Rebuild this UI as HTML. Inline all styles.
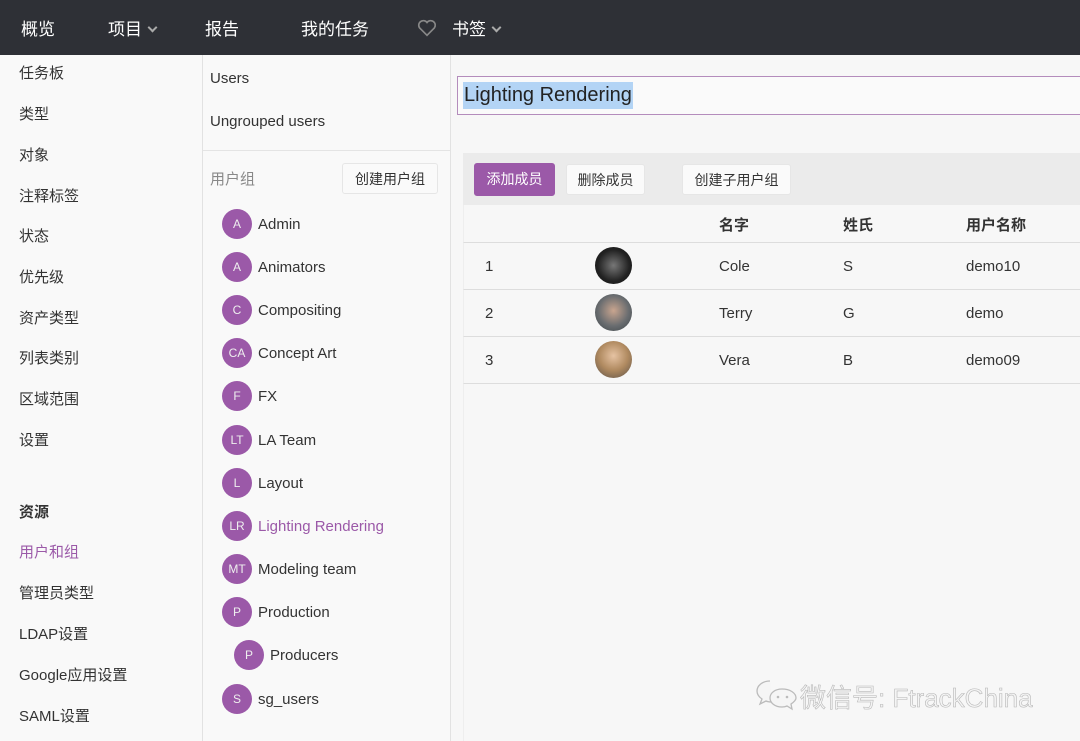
<!DOCTYPE html>
<html><head><meta charset="utf-8"><style>
*{margin:0;padding:0;box-sizing:border-box}
body{width:1080px;height:741px;overflow:hidden;background:#f7f7f7;font-family:"Liberation Sans","Noto Sans CJK SC",sans-serif;color:#333;position:relative}
.top{position:absolute;left:0;top:0;width:1080px;height:55px;background:#2e3036;color:#fff;font-size:17px}
.top span{position:absolute;top:15px}
.chev{display:inline-block;width:7px;height:7px;border-right:2.5px solid #aaa;border-bottom:2.5px solid #aaa;transform:rotate(45deg);margin-left:7px;position:relative;top:-4px}
.abs{position:absolute;white-space:nowrap}
.left{position:absolute;left:0;top:55px;width:203px;height:686px;border-right:1px solid #e2e2e2;background:#f9f9f9}
.mid{position:absolute;left:203px;top:55px;width:248px;height:686px;border-right:1px solid #e2e2e2;background:#f9f9f9}
.l{font-size:15px;left:19px}
.c{position:absolute;width:30px;height:30px;border-radius:50%;background:#9b59a8;color:#eee;font-size:12px;text-align:center;line-height:30px}
.g{font-size:15px;margin-top:2px}
.btn{position:absolute;background:#fafafa;border:1px solid #e6e6e6;border-radius:3px;font-size:14px;text-align:center;line-height:31px}
.row{position:absolute;left:463px;width:617px;border-bottom:1px solid #ddd;font-size:15px}
</style></head><body>
<div class="top">
<span style="left:21px">概览</span>
<span style="left:108px">项目<i class="chev"></i></span>
<span style="left:205px">报告</span>
<span style="left:301px">我的任务</span>
<span style="left:416px;top:17px"><svg width="22" height="22" viewBox="0 0 24 24"><path d="M12 20 L4 12 A4.5 4.5 0 0 1 12 6 A4.5 4.5 0 0 1 20 12 Z" fill="none" stroke="#888" stroke-width="1.8"/></svg></span>
<span style="left:452px">书签<i class="chev"></i></span>
</div>
<div class="left">
<div class="abs l" style="top:7px">任务板</div>
<div class="abs l" style="top:48px">类型</div>
<div class="abs l" style="top:89px">对象</div>
<div class="abs l" style="top:130px">注释标签</div>
<div class="abs l" style="top:170px">状态</div>
<div class="abs l" style="top:211px">优先级</div>
<div class="abs l" style="top:252px">资产类型</div>
<div class="abs l" style="top:292px">列表类别</div>
<div class="abs l" style="top:333px">区域范围</div>
<div class="abs l" style="top:374px">设置</div>
<div class="abs l" style="top:446px;font-weight:bold">资源</div>
<div class="abs l" style="top:486px;color:#9b59a8">用户和组</div>
<div class="abs l" style="top:527px">管理员类型</div>
<div class="abs l" style="top:568px">LDAP设置</div>
<div class="abs l" style="top:609px">Google应用设置</div>
<div class="abs l" style="top:650px">SAML设置</div>
</div>
<div class="mid">
<div class="abs g" style="left:7px;top:13px">Users</div>
<div class="abs g" style="left:7px;top:56px">Ungrouped users</div>
<div class="abs" style="left:0;top:95px;width:247px;border-top:1px solid #e4e4e4"></div>
<div class="abs" style="left:7px;top:113px;font-size:15px;color:#888">用户组</div>
<div class="btn" style="left:139px;top:108px;width:96px;height:31px">创建用户组</div>
</div>
<div class="c" style="left:222px;top:209px">A</div><div class="abs g" style="left:258px;top:214px">Admin</div>
<div class="c" style="left:222px;top:252px">A</div><div class="abs g" style="left:258px;top:257px">Animators</div>
<div class="c" style="left:222px;top:295px">C</div><div class="abs g" style="left:258px;top:300px">Compositing</div>
<div class="c" style="left:222px;top:338px">CA</div><div class="abs g" style="left:258px;top:343px">Concept Art</div>
<div class="c" style="left:222px;top:381px">F</div><div class="abs g" style="left:258px;top:386px">FX</div>
<div class="c" style="left:222px;top:425px">LT</div><div class="abs g" style="left:258px;top:430px">LA Team</div>
<div class="c" style="left:222px;top:468px">L</div><div class="abs g" style="left:258px;top:473px">Layout</div>
<div class="c" style="left:222px;top:511px">LR</div><div class="abs g" style="left:258px;top:516px;color:#9b59a8">Lighting Rendering</div>
<div class="c" style="left:222px;top:554px">MT</div><div class="abs g" style="left:258px;top:559px">Modeling team</div>
<div class="c" style="left:222px;top:597px">P</div><div class="abs g" style="left:258px;top:602px">Production</div>
<div class="c" style="left:234px;top:640px">P</div><div class="abs g" style="left:270px;top:645px">Producers</div>
<div class="c" style="left:222px;top:684px">S</div><div class="abs g" style="left:258px;top:689px">sg_users</div>

<div class="abs" style="left:457px;top:76px;width:630px;height:39px;border:1.5px solid #b48cbc;background:#fafafa"></div>
<div class="abs" style="left:463px;top:82px;height:27px;padding:0 1px;background:#b3d4f5;font-size:20px;line-height:27px;color:#222">Lighting Rendering</div>

<div class="abs" style="left:463px;top:153px;width:617px;height:52px;background:#ebebeb"></div>
<div class="btn" style="left:474px;top:163px;width:81px;height:33px;background:#9b59a8;border-color:#9b59a8;color:#fff">添加成员</div>
<div class="btn" style="left:566px;top:164px;width:79px;height:31px">删除成员</div>
<div class="btn" style="left:682px;top:164px;width:109px;height:31px">创建子用户组</div>

<div class="row" style="top:205px;height:38px;font-weight:bold;border-left:1px solid #eee">
<span class="abs" style="left:255px;top:9px">名字</span><span class="abs" style="left:379px;top:9px">姓氏</span><span class="abs" style="left:502px;top:9px">用户名称</span></div>
<div class="row" style="top:243px;height:47px;border-left:1px solid #eee"><span class="abs" style="left:21px;top:15px">1</span><div class="abs" style="left:131px;top:4px;width:37px;height:37px;border-radius:50%;background:radial-gradient(circle,#777,#222 60%,#111)"></div><span class="abs" style="left:255px;top:15px">Cole</span><span class="abs" style="left:379px;top:15px">S</span><span class="abs" style="left:502px;top:15px">demo10</span></div>
<div class="row" style="top:290px;height:47px;border-left:1px solid #eee"><span class="abs" style="left:21px;top:15px">2</span><div class="abs" style="left:131px;top:4px;width:37px;height:37px;border-radius:50%;background:radial-gradient(circle at 50% 45%,#c9a58f,#6a6d70 55%,#3b4448)"></div><span class="abs" style="left:255px;top:15px">Terry</span><span class="abs" style="left:379px;top:15px">G</span><span class="abs" style="left:502px;top:15px">demo</span></div>
<div class="row" style="top:337px;height:47px;border-left:1px solid #eee"><span class="abs" style="left:21px;top:15px">3</span><div class="abs" style="left:131px;top:4px;width:37px;height:37px;border-radius:50%;background:radial-gradient(circle at 50% 40%,#e6c3a3,#b08a60 50%,#5a5048)"></div><span class="abs" style="left:255px;top:15px">Vera</span><span class="abs" style="left:379px;top:15px">B</span><span class="abs" style="left:502px;top:15px">demo09</span></div>
<div class="abs" style="left:463px;top:384px;height:357px;border-left:1px solid #eee"></div>

<svg class="abs" style="left:756px;top:678px" width="42" height="34" viewBox="0 0 42 34"><path d="M14 3 C6 3 1 8 1 13 C1 16 3 19 6 21 L4 26 L10 23 C12 24 14 24 16 24" fill="#f5f5f5" stroke="#bbb" stroke-width="1.3"/><path d="M26 11 C19 11 14 15 14 20 C14 25 19 29 26 29 C28 29 29 29 31 28 L36 31 L35 26 C38 24 40 22 40 20 C40 15 34 11 26 11 Z" fill="#f5f5f5" stroke="#bbb" stroke-width="1.3"/><circle cx="22" cy="19" r="1.3" fill="#bbb"/><circle cx="31" cy="19" r="1.3" fill="#bbb"/></svg>
<div class="abs" style="left:800px;top:678px;font-size:26px;color:#f4f4f4;-webkit-text-stroke:0.6px #b8b8b8">微信号: FtrackChina</div>
</body></html>
